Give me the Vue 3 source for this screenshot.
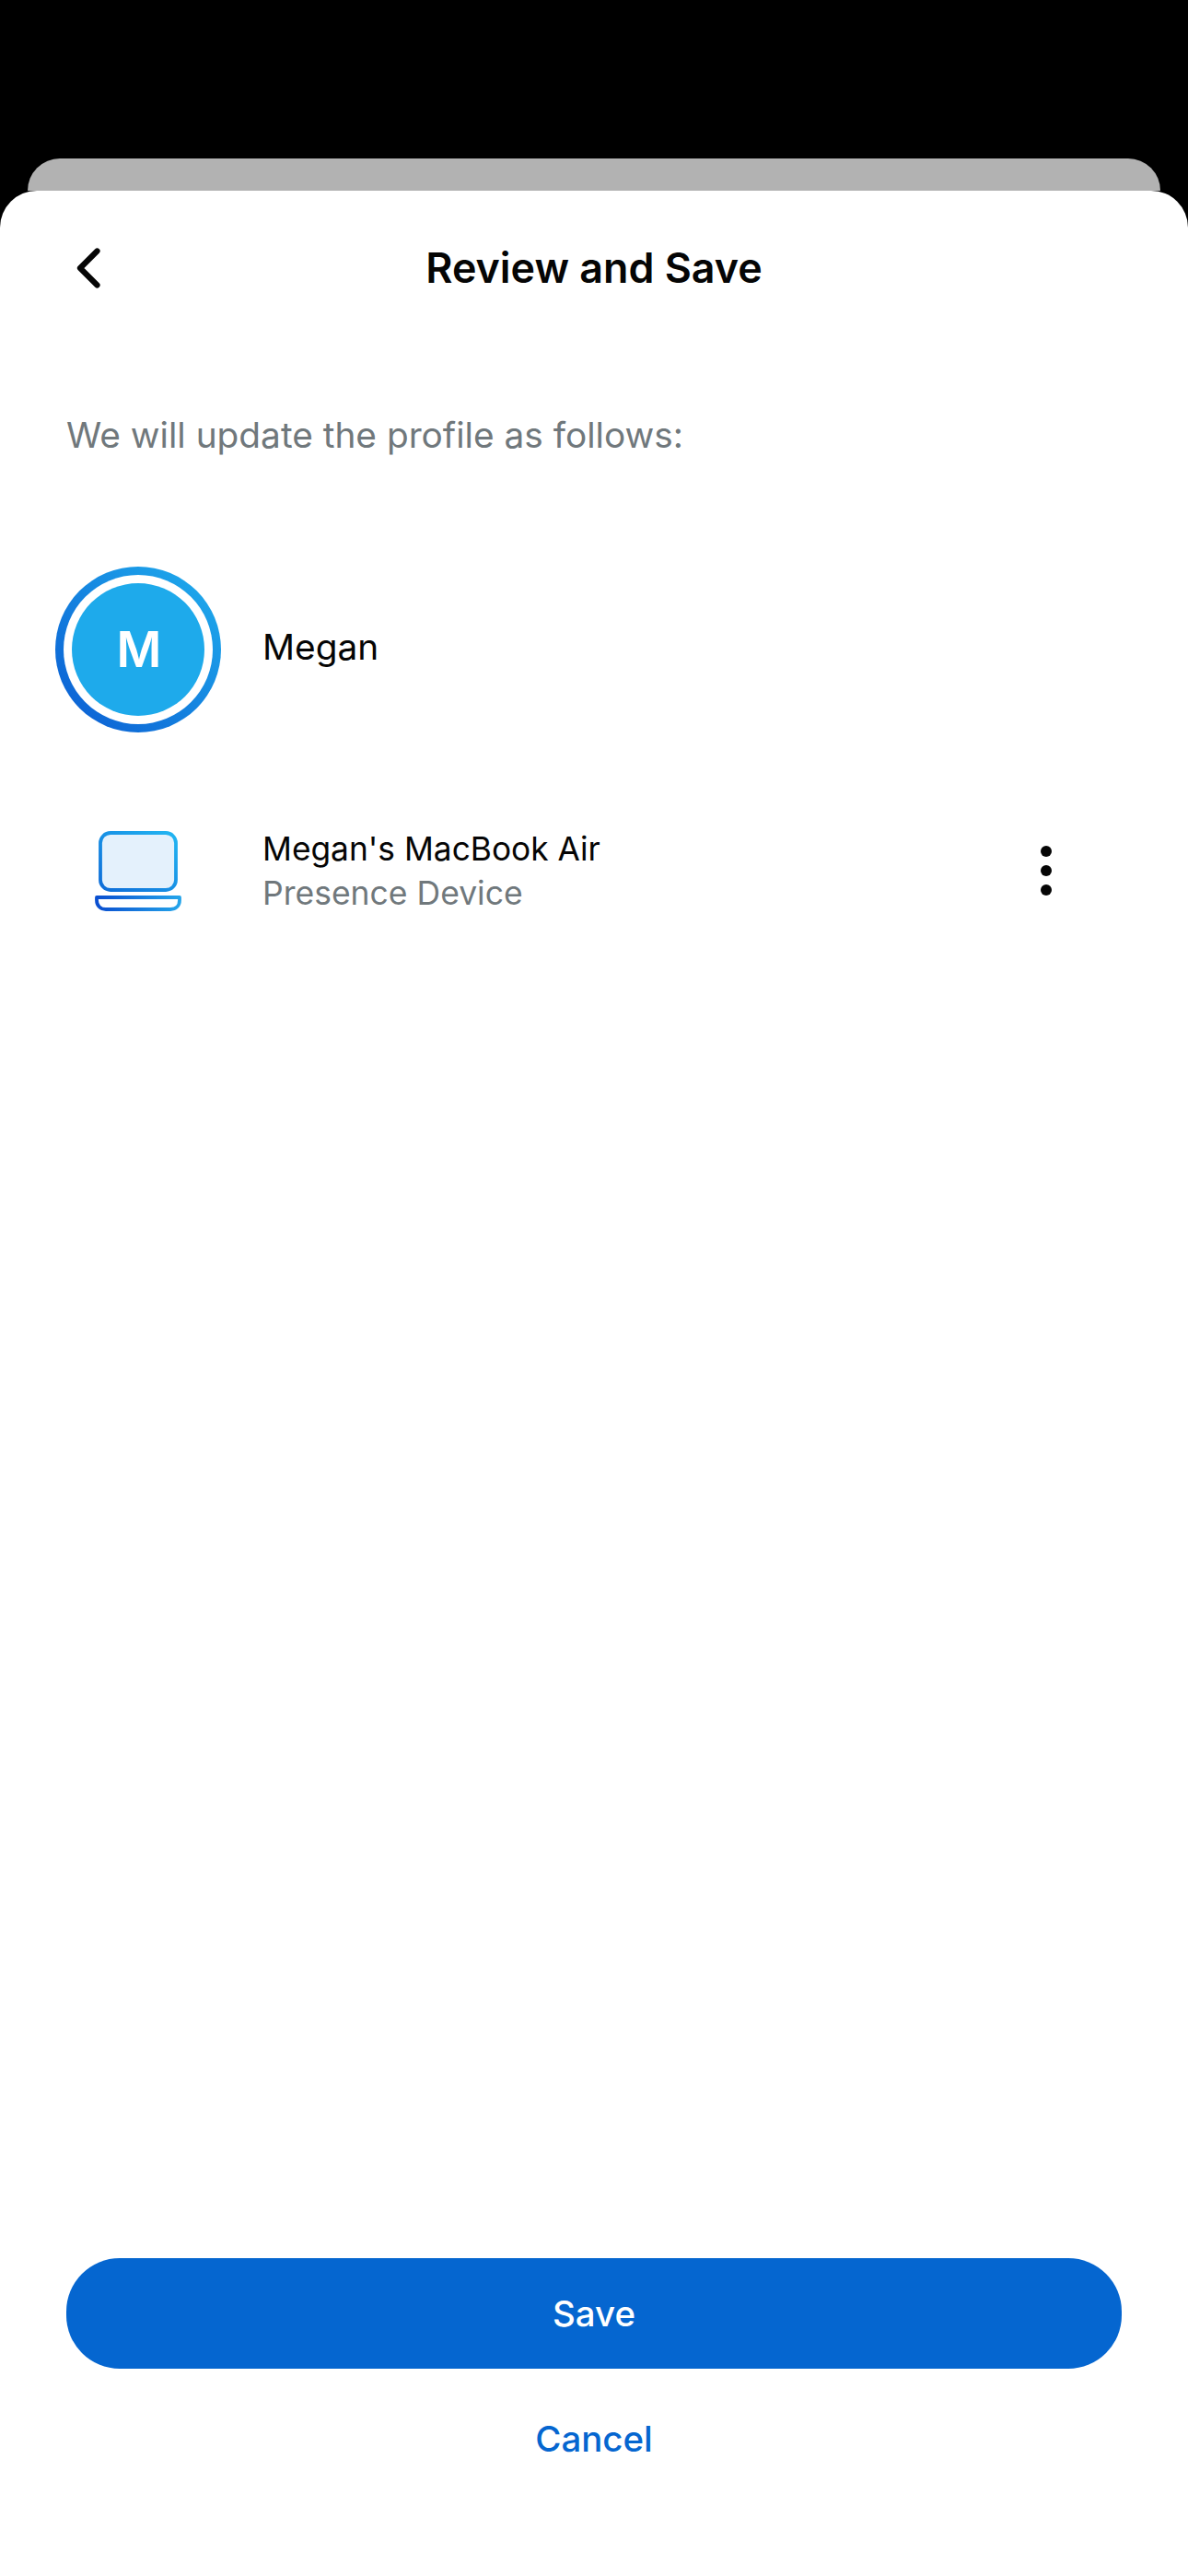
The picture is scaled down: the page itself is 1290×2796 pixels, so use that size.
<script setup>
const title = 'Review and Save'
</script>

<template>
  <div class="page">
    <div class="back-sheet"></div>
    <main class="sheet">
      <header class="head">
        <button class="back" aria-label="Back">
          <svg width="30" height="48" viewBox="0 0 30 48">
            <path d="M24.5 5.5 L6 24 L24.5 42.5" fill="none" stroke="#050505" stroke-width="6.2" stroke-linecap="round" stroke-linejoin="round" />
          </svg>
        </button>
        <h1 class="title">{{ title }}</h1>
      </header>

      <p class="intro">We will update the profile as follows:</p>

      <section class="row person">
        <div class="slot">
          <div class="ring">
            <div class="gap">
              <div class="avatar"><span class="initial">M</span></div>
            </div>
          </div>
        </div>
        <div class="name">Megan</div>
      </section>

      <section class="row device">
        <div class="slot">
          <svg width="100" height="96" viewBox="0 0 100 96">
            <defs>
              <linearGradient id="lapTop" x1="0" y1="1" x2="1" y2="0">
                <stop offset="0" stop-color="#0e6cd8" />
                <stop offset="1" stop-color="#22b6f2" />
              </linearGradient>
              <linearGradient id="lapBase" x1="0" y1="0.5" x2="1" y2="0.5">
                <stop offset="0" stop-color="#0a4fd0" />
                <stop offset="1" stop-color="#24a4ea" />
              </linearGradient>
            </defs>
            <rect x="9" y="6" width="82" height="62" rx="11" fill="#e4f1fc" stroke="url(#lapTop)" stroke-width="3.8" />
            <path d="M5 76 H95 V79 C95 85 91 89 85 89 H15 C9 89 5 85 5 79 Z" fill="#fff" stroke="url(#lapBase)" stroke-width="3.8" stroke-linejoin="round" />
          </svg>
        </div>
        <div class="info">
          <div class="name small">Megan's MacBook Air</div>
          <div class="sub">Presence Device</div>
        </div>
        <div class="dots" aria-label="More">
          <span></span><span></span><span></span>
        </div>
      </section>

      <div class="actions">
        <button class="save">Save</button>
        <button class="cancel">Cancel</button>
      </div>
    </main>
  </div>
</template>

<style scoped>
.page {
  height: 2796px;
  background: #000;
  padding-top: 172px;
  box-sizing: border-box;
  display: flex;
  flex-direction: column;
  font-family: Inter, "Noto Sans", sans-serif;
  overflow: hidden;
}
.back-sheet {
  height: 35px;
  margin: 0 30px;
  background: #b2b2b2;
  border-radius: 40px 40px 0 0;
}
.sheet {
  flex: 1;
  background: #fff;
  border-radius: 40px 40px 0 0;
  display: flex;
  flex-direction: column;
  min-height: 0;
}
.head {
  position: relative;
  height: 96px;
  margin-top: 36px;
  display: flex;
  align-items: center;
  justify-content: center;
}
.back {
  position: absolute;
  left: 81px;
  top: 24px;
  padding: 0;
  border: 0;
  background: none;
  display: flex;
}
.title {
  margin: 0;
  font-size: 44.8px;
  font-weight: 600;
  line-height: 56px;
  color: #050505;
}
.intro {
  margin: 108px 0 0;
  padding-left: 72px;
  font-size: 38.8px;
  line-height: 50px;
  color: #70787c;
}
.row {
  display: flex;
  align-items: center;
}
.slot {
  flex: none;
  width: 285px;
  padding: 0 45px 0 60px;
  box-sizing: border-box;
  display: flex;
  justify-content: center;
}
.person {
  margin-top: 118px;
}
.ring {
  width: 180px;
  height: 180px;
  flex: none;
  border-radius: 50%;
  background: linear-gradient(45deg, #0a5ad2, #20b0ee);
  padding: 9px;
  box-sizing: border-box;
}
.gap {
  width: 100%;
  height: 100%;
  border-radius: 50%;
  background: #fff;
  padding: 9px;
  box-sizing: border-box;
}
.avatar {
  width: 100%;
  height: 100%;
  border-radius: 50%;
  background: #1eaaeb;
  color: #fff;
  font-size: 53px;
  font-weight: 600;
  display: flex;
  align-items: center;
  justify-content: center;
}
.initial {
  margin-left: 2px;
}
.name {
  font-size: 38.8px;
  line-height: 48px;
  color: #050505;
}
.name.small {
  font-size: 35.3px;
}
.person .name {
  margin-top: -6px;
}
.device {
  margin-top: 103px;
}
.info {
  flex: 1;
}
.sub {
  font-size: 35.5px;
  line-height: 48px;
  color: #70787c;
}
.dots {
  display: flex;
  flex-direction: column;
  gap: 9px;
  margin-right: 148px;
  margin-top: -3px;
}
.dots span {
  width: 12px;
  height: 12px;
  border-radius: 50%;
  background: #050505;
}
.actions {
  margin-top: auto;
  padding: 0 72px 119px;
  display: flex;
  flex-direction: column;
  align-items: stretch;
}
.save {
  height: 120px;
  border: 0;
  border-radius: 58px;
  background: #0566d0;
  color: #fff;
  font: 500 38.4px Inter, sans-serif;
}
.cancel {
  height: 60px;
  margin-top: 46px;
  border: 0;
  background: none;
  color: #0566d0;
  font: 500 38.4px Inter, sans-serif;
}
</style>
